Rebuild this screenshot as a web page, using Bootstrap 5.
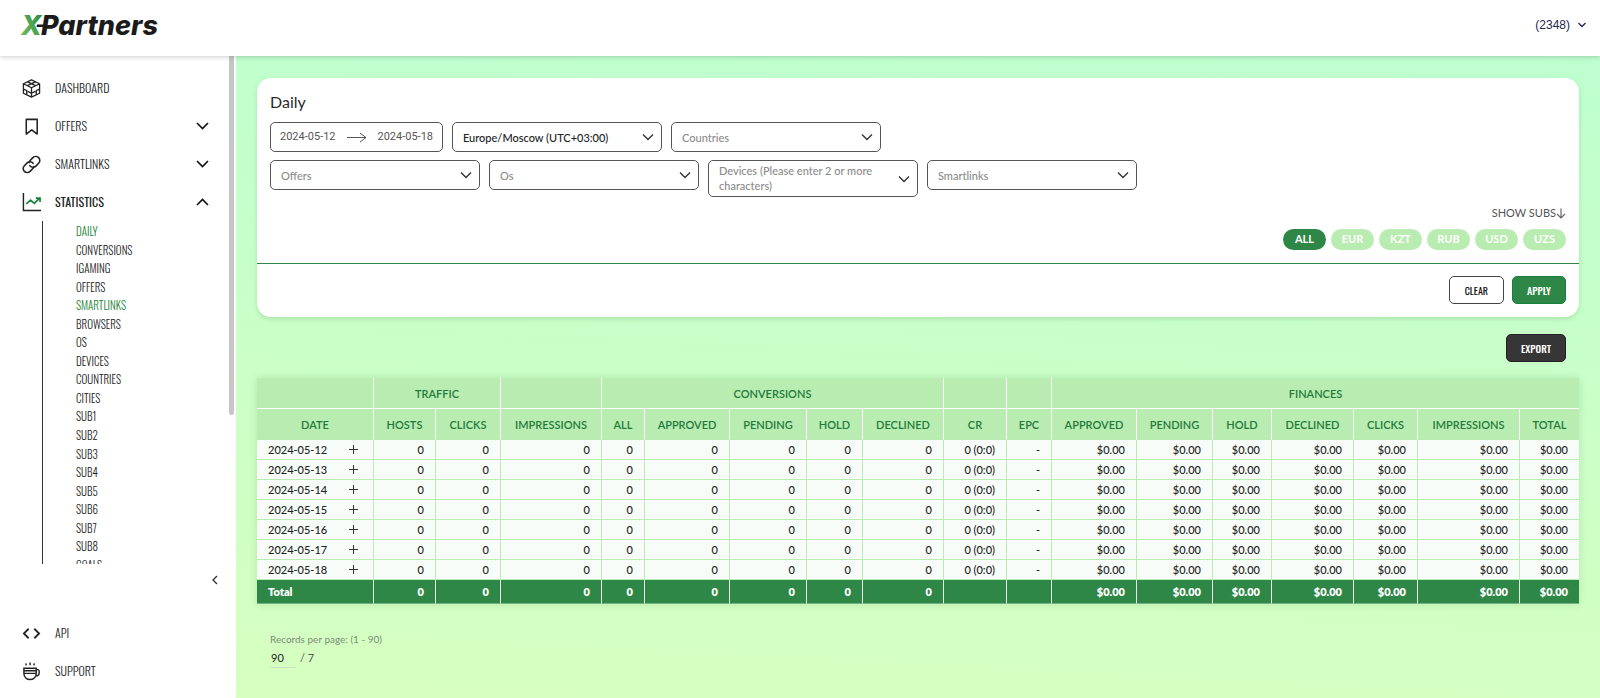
<!DOCTYPE html>
<html lang="en">
<head>
<meta charset="utf-8">
<meta name="viewport" content="width=device-width, initial-scale=1">
<title>XPartners – Daily statistics</title>
<link href="https://cdn.jsdelivr.net/npm/bootstrap@5.3.0/dist/css/bootstrap.min.css" rel="stylesheet">
<style>
:root { --brand: #2e8746; --mint: #b9ecb0; --ink: #2b2b2b; --narrow: "Oswald", "Roboto Condensed", "Liberation Sans Narrow", sans-serif; }
body { font-family: "Lato", sans-serif; font-size: 12px; color: var(--ink); height: 100vh; }
.topbar { height: 56px; padding: 0 14px 6px 20px; box-shadow: 0 1px 5px rgba(0,0,0,.2); z-index: 5; }
.brand-logo { width: 150px; height: 36px; }
.account { font-family: "Liberation Sans", sans-serif; font-size: 12px; color: #26264f; }
.sidebar { width: 236px; font-family: var(--narrow); font-weight: 300; }
.side-link { height: 38px; padding: 0 27px 0 22px; gap: 14px; font-size: 12px; color: #222; text-decoration: none; }
.side-link.current { color: #222; font-weight: 400; }
.side-link svg:first-child { width: 19px; height: 19px; }
.side-scroll { min-height: 0; padding-top: 13px; }
.side-thumb { width: 5px; height: 359px; right: 2px; top: 0; background: #c6c6c6; border-radius: 0 0 3px 3px; }
.sub-list { height: 353px; margin-left: 42px; padding: 1px 0 0 33px; border-left: 1px solid #333; }
.sub-list a { display: block; font-size: 11px; line-height: 18px; color: #222; text-decoration: none; }
.sub-list a.on { color: #178337; }
.collapse-btn { height: 34px; padding: 0 16px 6px; }
.workspace { background: linear-gradient(183deg, #beffcf, #c9ffc8 45%, #d6ffc0 100%); padding: 22px 21px; min-width: 0; }
.panel { border-radius: 14px; box-shadow: 0 2px 5px rgba(0,80,0,.16); padding: 12px 0 13px; }
.panel-body { padding: 0 13px; }
.panel h1 { font-size: 16px; line-height: 24px; }
.filters { gap: 9px; }
.field { width: 210px; height: 30px; border: 1px solid #555; border-radius: 5px; font-size: 11px; font-weight: 500; padding: 0 32px 0 10px; color: #8b8b8b; line-height: 15px; resize: none; overflow: hidden;
  background: #fff url("data:image/svg+xml,%3Csvg xmlns='http://www.w3.org/2000/svg' viewBox='0 0 12 8'%3E%3Cpath d='M1 1.5l5 5 5-5' fill='none' stroke='%23333' stroke-width='1.4'/%3E%3C/svg%3E") no-repeat right 7px center / 12px 8px; appearance: none; }
.field.chosen { color: #222; }
textarea.field { height: 37px; padding-top: 2px; }
.field::placeholder { color: #8b8b8b; opacity: 1; }
.daterange { width: 173px; height: 30px; border: 1px solid #555; border-radius: 5px; padding: 0 9px; }
.daterange input { width: 60px; border: 0; padding: 0; font-family: "Roboto", sans-serif; font-size: 11px; color: #555; background: none; }
.daterange input:last-child { text-align: right; }
.subs { font-size: 11px; line-height: 18px; color: #555; margin-top: 7px; text-decoration: none; }
.pills { gap: 5px; margin-top: 7px; }
.pill { width: 43px; height: 21px; border: 0; border-radius: 11px; background: var(--mint); color: #fff; font-size: 11px; font-weight: 700; padding: 0; }
.pill.on { background: var(--brand); }
.rule { border-top: 1px solid var(--brand); margin: 13px 0 12px; }
.act { height: 28px; border: 1px solid #444; border-radius: 5px; font-family: var(--narrow); font-size: 10px; padding: 0 15px; background: #fff; color: #111; font-weight: 400; }
.act.go { background: var(--brand); border-color: #17803a; color: #fff; font-weight: 500; padding: 0 14px; }
.act.dark { background: #363636; border-color: #2b1c2b; color: #fff; font-weight: 500; padding: 0 14px; }
.export-row { padding: 17px 13px 0; }
.report { table-layout: fixed; width: 100%; border-collapse: separate; border-spacing: 0; font-size: 11px; box-shadow: 0 0 8px rgba(0,80,0,.14); }
.report th, .report td { padding: 0 11px; white-space: nowrap; overflow: hidden; text-align: right; border-right: 1px solid #b9ecb0; border-bottom: 1px solid #b9ecb0; height: 20px; line-height: 19px; }
.report tr > :last-child { border-right: 0; }
.report thead th { background: var(--mint); color: #1f7a3b; font-weight: 600; text-align: center; padding: 0; border-color: #fff; height: 31px; }
.report thead tr:last-child th { border-bottom-color: #b9ecb0; }
.report tbody td, .report tbody th { background: #f7fcf8; font-weight: 500; color: #222; }
.report tfoot td, .report tfoot th { background: var(--brand); color: #fff; font-weight: 800; height: 24px; border-right-color: #e4f5e6; border-bottom-color: #77b085; }
.report .day { text-align: left; }
.plus { border: 0; background: none; padding: 0; line-height: 0; margin-right: 4px; }
.pager { padding: 26px 13px 0; font-size: 11px; color: #7c8c7a; }
.pager label { font-size: 10px; line-height: 18px; }
.pager input { width: 26px; height: 20px; border: 0; border-bottom: 1px solid #cfe3cb; background: none; padding: 0 1px; color: #222; font-size: 11px; }
.pager span { color: #555; }
</style>
</head>
<body class="d-flex flex-column">
<header class="topbar bg-white d-flex align-items-center justify-content-between position-relative flex-shrink-0">
  <a href="#" class="lh-1" aria-label="XPartners">
    <svg class="brand-logo" viewBox="0 0 150 36">
      <defs><linearGradient id="leaf" x1="1" y1="0" x2="0" y2="1"><stop offset="0" stop-color="#1e8440"/><stop offset="1" stop-color="#7fc668"/></linearGradient></defs>
      <g font-family="Inter, sans-serif" font-style="italic" font-weight="800" font-size="27">
        <text x="1" y="28" fill="url(#leaf)">X</text>
        <text x="21" y="28" fill="#1b1b1b">Partners</text>
      </g>
      <path d="M17 17.500h9v2.500h-9.500z" fill="#1b1b1b"/>
    </svg>
  </a>
  <button class="account btn p-0 border-0 d-flex align-items-center gap-2">(2348)
    <svg width="8" height="6" viewBox="0 0 8 6"><path d="M.5 1l3.500 3.500L7.500 1" fill="none" stroke="#26264f" stroke-width="1.300"/></svg>
  </button>
</header>

<div class="d-flex flex-grow-1 overflow-hidden">
  <nav class="sidebar bg-white position-relative d-flex flex-column flex-shrink-0 pb-2">
    <div class="side-thumb position-absolute"></div>
    <div class="side-scroll flex-grow-1 overflow-hidden">
      <a href="#" class="side-link d-flex align-items-center">
        <svg viewBox="0 0 20 20" fill="none" stroke="#222" stroke-width="1.400" stroke-linejoin="round"><path d="M10 1l8.500 4v10L10 19l-8.500-4V5zM1.500 5L10 9.200 18.500 5M10 9.200V19M6 3l8.300 4M14 3L5.700 7M1.500 10.500l3.500 1.700v4.200M6 13l4 2M18.500 10.500L15 12.200v4.200M14 13l-4 2"/></svg>DASHBOARD</a>
      <a href="#" class="side-link d-flex align-items-center">
        <svg viewBox="0 0 20 20" fill="none" stroke="#222" stroke-width="1.600" stroke-linejoin="round"><path d="M4.500 2.500h11.500V18l-5.700-4.500L4.500 18z"/></svg>OFFERS
        <svg class="ms-auto" width="13" height="8" viewBox="0 0 13 8"><path d="M1 1l5.500 5.500L12 1" fill="none" stroke="#111" stroke-width="1.600"/></svg></a>
      <a href="#" class="side-link d-flex align-items-center">
        <svg viewBox="0 0 24 24" fill="none" stroke="#222" stroke-width="2" stroke-linecap="round"><path d="M10 13.500a5 5 0 0 0 7.500.5l3.500-3.500a5 5 0 0 0-7.200-7.200L10 7.200a5 5 0 0 0-1 2.300M14 10.500a5 5 0 0 0-7.500-.5L3 13.500a5 5 0 0 0 7.200 7.200l3.800-3.900a5 5 0 0 0 1-2.300"/></svg>SMARTLINKS
        <svg class="ms-auto" width="13" height="8" viewBox="0 0 13 8"><path d="M1 1l5.500 5.500L12 1" fill="none" stroke="#111" stroke-width="1.600"/></svg></a>
      <a href="#" class="side-link current d-flex align-items-center">
        <svg viewBox="0 0 20 20" fill="none"><path d="M1.500 0v18.500H20" stroke="#222" stroke-width="1.500"/><path d="M4.500 11.500l4.500-4 4 3.500 5-5M14.500 5.500H19v4" stroke="#178337" stroke-width="1.800"/></svg>STATISTICS
        <svg class="ms-auto" width="13" height="8" viewBox="0 0 13 8"><path d="M1 7l5.500-5.500L12 7" fill="none" stroke="#111" stroke-width="1.600"/></svg></a>
      <ul class="sub-list list-unstyled d-flex flex-column justify-content-between mb-0">
        <li><a href="#" class="on">DAILY</a></li>
        <li><a href="#">CONVERSIONS</a></li>
        <li><a href="#">IGAMING</a></li>
        <li><a href="#">OFFERS</a></li>
        <li><a href="#" class="on">SMARTLINKS</a></li>
        <li><a href="#">BROWSERS</a></li>
        <li><a href="#">OS</a></li>
        <li><a href="#">DEVICES</a></li>
        <li><a href="#">COUNTRIES</a></li>
        <li><a href="#">CITIES</a></li>
        <li><a href="#">SUB1</a></li>
        <li><a href="#">SUB2</a></li>
        <li><a href="#">SUB3</a></li>
        <li><a href="#">SUB4</a></li>
        <li><a href="#">SUB5</a></li>
        <li><a href="#">SUB6</a></li>
        <li><a href="#">SUB7</a></li>
        <li><a href="#">SUB8</a></li>
        <li><a href="#">GOALS</a></li>
      </ul>
    </div>
    <div class="collapse-btn d-flex justify-content-end align-items-center flex-shrink-0 mb-3">
      <button class="btn p-0 border-0 lh-1" aria-label="Collapse menu"><svg width="10" height="10" viewBox="0 0 10 10"><path d="M7 1L3 5l4 4" fill="none" stroke="#333" stroke-width="1.400"/></svg></button>
    </div>
    <a href="#" class="side-link d-flex align-items-center flex-shrink-0">
      <svg viewBox="0 0 20 20" fill="none" stroke="#222" stroke-width="1.900"><path d="M7 5l-5 5 5 5M13 5l5 5-5 5"/></svg>API</a>
    <a href="#" class="side-link d-flex align-items-center flex-shrink-0">
      <svg viewBox="0 0 20 20" fill="none" stroke="#222" stroke-width="1.500"><path d="M2 6.500h13v5.500c0 4-3 6.500-6.500 6.500S2 16 2 12zM2 9.300h13M2 12h13M15 8h1.500A1.500 1.500 0 0 1 18 9.500V12a2.500 2.500 0 0 1-3.500 2.300M4 1.500l.5 2M8.500.5v3M13 1.500l-.5 2"/></svg>SUPPORT</a>
  </nav>

  <main class="workspace flex-grow-1 overflow-hidden">
    <section class="panel bg-white">
      <div class="panel-body">
        <h1 class="fw-normal mb-2">Daily</h1>
        <div class="filters d-flex flex-wrap mb-2">
          <div class="daterange d-flex align-items-center justify-content-between">
            <input type="text" value="2024-05-12" aria-label="From date">
            <svg width="20" height="11" viewBox="0 0 20 11" class="flex-shrink-0"><path d="M0 5.500h19M13 1l6 4.500L13 10" fill="none" stroke="#555"/></svg>
            <input type="text" value="2024-05-18" aria-label="To date">
          </div>
          <select class="field chosen" aria-label="Time zone"><option>Europe/Moscow (UTC+03:00)</option></select>
          <select class="field" aria-label="Countries"><option>Countries</option></select>
        </div>
        <div class="filters d-flex flex-wrap align-items-start">
          <select class="field" aria-label="Offers"><option>Offers</option></select>
          <select class="field" aria-label="Os"><option>Os</option></select>
          <textarea class="field" aria-label="Devices" placeholder="Devices (Please enter 2 or more characters)"></textarea>
          <select class="field" aria-label="Smartlinks"><option>Smartlinks</option></select>
        </div>
        <div class="d-flex justify-content-end"><a href="#" class="subs d-flex align-items-center">SHOW SUBS<svg width="10" height="11" viewBox="0 0 10 11"><path d="M5 .5v9.500M1 6l4 4 4-4" fill="none" stroke="#666" stroke-width="1.200"/></svg></a></div>
        <div class="pills d-flex justify-content-end">
          <button class="pill on">ALL</button><button class="pill">EUR</button><button class="pill">KZT</button><button class="pill">RUB</button><button class="pill">USD</button><button class="pill">UZS</button>
        </div>
      </div>
      <div class="rule"></div>
      <div class="panel-body d-flex justify-content-end gap-2">
        <button class="act">CLEAR</button><button class="act go">APPLY</button>
      </div>
    </section>

    <div class="export-row d-flex justify-content-end mb-3"><button class="act dark">EXPORT</button></div>

    <table class="report">
      <colgroup id="cols"></colgroup>
      <thead>
        <tr><th></th><th colspan="2">TRAFFIC</th><th></th><th colspan="5">CONVERSIONS</th><th></th><th></th><th colspan="7">FINANCES</th></tr>
        <tr><th>DATE</th><th>HOSTS</th><th>CLICKS</th><th>IMPRESSIONS</th><th>ALL</th><th>APPROVED</th><th>PENDING</th><th>HOLD</th><th>DECLINED</th><th>CR</th><th>EPC</th><th>APPROVED</th><th>PENDING</th><th>HOLD</th><th>DECLINED</th><th>CLICKS</th><th>IMPRESSIONS</th><th>TOTAL</th></tr>
      </thead>
      <tbody id="days"></tbody>
      <tfoot id="sum"></tfoot>
    </table>

    <div class="pager">
      <label for="perpage" class="d-block">Records per page: (1 - 90)</label>
      <div class="d-flex align-items-center gap-1"><input id="perpage" type="text" value="90"><span>/ 7</span></div>
    </div>
  </main>
</div>

<script src="https://cdn.jsdelivr.net/npm/bootstrap@5.3.0/dist/js/bootstrap.bundle.min.js"></script>
<script>
  const widths = [117,62,65,101,43,85,77,56,81,63,45,85,76,59,82,64,102,59];
  const total = widths.reduce((a, b) => a + b);
  document.getElementById('cols').innerHTML = widths.map(w => `<col style="width:${w / total * 100}%">`).join('');
  const cells = (cr, epc) => [...Array(8).fill('0'), cr, epc, ...Array(7).fill('$0.00')].map(v => `<td>${v}</td>`).join('');
  const plus = '<button class="plus" aria-label="Expand"><svg width="9" height="9" viewBox="0 0 9 9"><path d="M4.500 0v9M0 4.500h9" stroke="#333"/></svg></button>';
  document.getElementById('days').innerHTML = [12,13,14,15,16,17,18].map(d =>
    `<tr><th scope="row"><div class="d-flex align-items-center justify-content-between">2024-05-${d}${plus}</div></th>${cells('0 (0:0)', '-')}</tr>`).join('');
  document.getElementById('sum').innerHTML = `<tr><th scope="row" class="day">Total</th>${cells('', '')}</tr>`;
</script>
</body>
</html>
